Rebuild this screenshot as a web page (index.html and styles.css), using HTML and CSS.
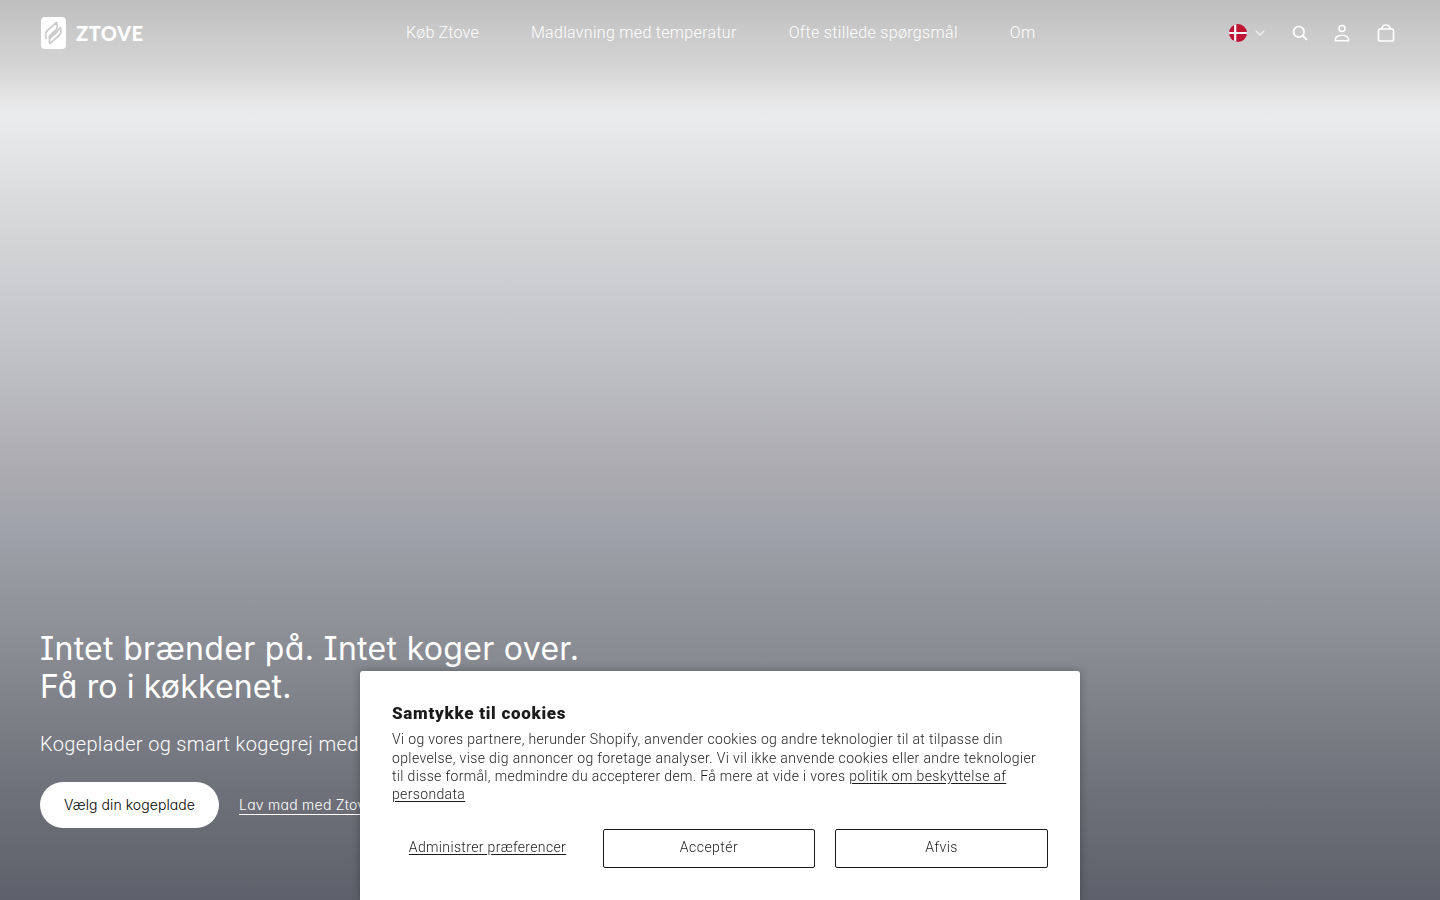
FILE: index.html
```html
<!DOCTYPE html>
<html lang="da">
<head>
<meta charset="utf-8">
<title>Ztove</title>
<link rel="stylesheet" href="styles.css">
</head>
<body>
<div class="page">
  <header class="header">
    <a class="brand">
      <svg width="26" height="34" viewBox="0 0 26 34" fill="none"><rect x="1" y="1" width="25" height="32" rx="4" fill="#fff"/><g stroke="#cbcbcb" stroke-width="1.700" stroke-linejoin="round" stroke-linecap="round"><path d="M6 22.500Q4.500 17 8 14L16.500 6.500Q18.500 11.500 15.500 14.500L10 19.500Q8.500 21 9.500 22.500L17.500 15.500"/><path d="M20.500 11.500Q22 17 18.500 20L10 27.500Q8.500 23 11 20.500L17 15Q18.500 13.500 20.500 11.500"/></g></svg>
      <span class="wordmark">ZTOVE</span>
    </a>
    <nav class="nav">
      <a class="n1">Køb Ztove</a><a class="n2">Madlavning med temperatur</a><a class="n3">Ofte stillede spørgsmål</a><a class="n4">Om</a>
    </nav>
    <div class="tools">
      <svg class="flag" width="18" height="18" viewBox="0 0 18 18"><defs><clipPath id="round"><circle cx="9" cy="9" r="9"/></clipPath></defs><g clip-path="url(#round)"><path d="M0 0h18v18H0z" fill="#c01535"/><path d="M0 9h18M6.200 0v18" stroke="#fff" stroke-width="2.200"/></g></svg>
      <svg class="chev" width="10" height="6" viewBox="0 0 10 6" fill="none" stroke="#fff" stroke-opacity=".85" stroke-width="1.100"><path d="M.8.800l4.200 4.200L9.200.8"/></svg>
      <svg class="search" width="16" height="16" viewBox="0 0 16 16" fill="none" stroke="#fff" stroke-width="1.700" stroke-linecap="round"><circle cx="6.800" cy="6.800" r="5.300"/><path d="M10.700 10.700L14.500 14.500"/></svg>
      <svg class="user" width="16" height="18" viewBox="0 0 16 18" fill="none" stroke="#fff" stroke-width="1.500"><circle cx="8" cy="4.500" r="3"/><path d="M1.200 16.700C1.200 13 4 11.200 8 11.200S14.800 13 14.800 16.700Z" stroke-linejoin="round"/></svg>
      <svg class="bag" width="18" height="18" viewBox="0 0 18 18" fill="none" stroke="#fff" stroke-width="1.700"><rect x="1.500" y="5" width="15" height="12" rx="1.800"/><path d="M4.800 5Q5.300 1 9 1T13.200 5"/></svg>
    </div>
  </header>
  <main class="hero">
    <h1><span class="h1a">Intet brænder på. Intet koger over.</span><br><span class="h1b">Få ro i køkkenet.</span></h1>
    <p class="lead">Kogeplader og smart kogegrej med</p>
    <div class="actions"><a class="pill">Vælg din kogeplade</a><a class="link">Lav mad med Ztove</a></div>
  </main>
</div>
<section class="cookie">
  <h2>Samtykke til cookies</h2>
  <p class="copy"><span class="c1">Vi og vores partnere, herunder Shopify, anvender cookies og andre teknologier til at tilpasse din</span><br><span class="c2">oplevelse, vise dig annoncer og foretage analyser. Vi vil ikke anvende cookies eller andre teknologier</span><br><span class="c3">til disse formål, medmindre du accepterer dem. Få mere at vide i vores <a>politik om beskyttelse af</a></span><br><a class="c4">persondata</a></p>
  <div class="choices"><button class="prefs">Administrer præferencer</button><button class="box">Acceptér</button><button class="box">Afvis</button></div>
</section>
</body>
</html>
```
FILE: styles.css
```css
* { box-sizing: border-box; }
body { margin: 0; height: 900px; overflow: hidden; font-family: Roboto, sans-serif; font-weight: 300; color: #fff; }
h1, h2, p { margin: 0; font-weight: 300; }
.page {
  height: 900px; display: flex; flex-direction: column; justify-content: space-between;
  background: linear-gradient(#bebebe 0, #cacaca 33px, #d6d6d6 70px, #dfdfdf 88px, #e8e9ea 106px, #eaebec 118px, #d8d9da 210px, #c5c6ca 330px, #aaaaae 480px, #a1a3ac 525px, #8c8e96 640px, #70737b 780px, #5e606b 900px);
}
.header { height: 66px; display: grid; grid-template-columns: 366px 1fr 211px; align-items: center; padding: 0 0 0 40px; }
.brand { display: flex; align-items: center; gap: 10px; }
.wordmark { font: 900 20px/24px Lato, sans-serif; letter-spacing: .5px; }
.nav { display: flex; gap: 52px; font-size: 16px; white-space: nowrap; margin-top: -2px; }
.nav a { letter-spacing: .31px; }
.nav .n1 { letter-spacing: .2px; }
.nav .n3 { letter-spacing: .34px; }
.tools { display: flex; align-items: center; }
.chev { margin-left: 8px; }
.search { margin-left: 27px; }
.user { margin-left: 26px; }
.bag { margin-left: 27px; }
.hero { padding: 0 40px 72px; }
h1 { font: 400 32px/38px Inter, sans-serif; font-feature-settings: "cv08", "cv11"; white-space: nowrap; }
.h1a { letter-spacing: .31px; }
.h1b { letter-spacing: .15px; }
.lead { font-size: 20px; line-height: 28px; margin: 24px 0; letter-spacing: .34px; }
.actions { display: flex; align-items: center; gap: 20px; font: 300 14px Inter, sans-serif; font-feature-settings: "cv11"; }
.pill { width: 179px; height: 46px; border-radius: 23px; background: #fff; color: #000; display: flex; align-items: center; justify-content: center; padding-bottom: 2px; letter-spacing: .07px; }
.link { border-bottom: 1px solid #fff; line-height: 18px; letter-spacing: .25px; }
.cookie { position: fixed; left: 360px; top: 671px; width: 720px; height: 229px; padding: 32px 32px 0; background: #fff; color: #1b1b1b; border-radius: 3px 3px 0 0; box-shadow: 0 0 8px rgba(0,0,0,.3); }
h2 { font-size: 17px; font-weight: 900; line-height: 20px; letter-spacing: .7px; }
.copy { font-size: 14px; line-height: 18.200px; margin-top: 7.400px; white-space: nowrap; letter-spacing: .35px; }
.c2 { letter-spacing: .38px; }
.copy a { text-decoration: underline; text-underline-offset: 2px; }
.choices { display: grid; grid-template-columns: 191px 212px 213px; justify-content: space-between; margin-top: 25.600px; }
button { font: 300 14px Roboto, sans-serif; color: #1b1b1b; height: 39px; background: none; border: 0; padding: 0 0 3px; letter-spacing: .35px; }
.box { border: 1px solid #1b1b1b; border-radius: 2px; letter-spacing: .45px; }
.prefs { text-decoration: underline; text-underline-offset: 2px; }
```
